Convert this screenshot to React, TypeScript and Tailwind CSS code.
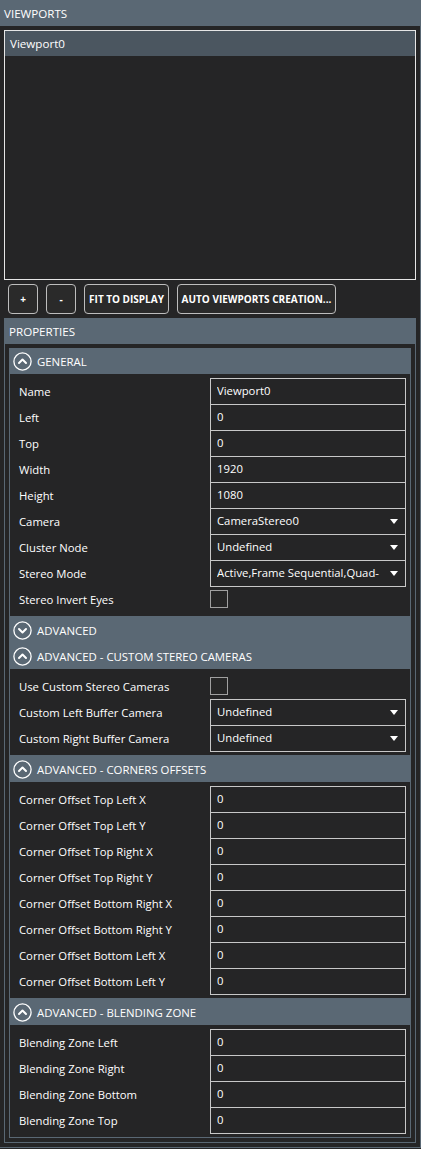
import React from "react";

const FONT = "font-['Open_Sans','Noto_Sans',sans-serif]";

function ChevronCircle({ up }: { up: boolean }) {
  return (
    <svg width="19" height="19" viewBox="0 0 19 19" className="shrink-0">
      <circle cx="9.5" cy="9.5" r="8.6" fill="none" stroke="#ffffff" strokeWidth="1.3" />
      {up ? (
        <path d="M6 11 L9.5 7.5 L13 11" fill="none" stroke="#ffffff" strokeWidth="2" strokeLinecap="round" strokeLinejoin="round" />
      ) : (
        <path d="M6 8 L9.5 11.5 L13 8" fill="none" stroke="#ffffff" strokeWidth="2" strokeLinecap="round" strokeLinejoin="round" />
      )}
    </svg>
  );
}

function SectionHeader({ title, up }: { title: string; up: boolean }) {
  return (
    <div className="h-[26px] bg-[#5a6874] flex items-center pl-[4px] gap-[5px] text-[11.4px] text-white">
      <ChevronCircle up={up} />
      <span className="pt-px">{title}</span>
    </div>
  );
}

type Row =
  | { label: string; kind: "text"; value: string }
  | { label: string; kind: "select"; value: string }
  | { label: string; kind: "check" };

function RowView({ row }: { row: Row }) {
  return (
    <div className="h-[26px] flex">
      <div className="w-[200px] pl-[9px] self-center pt-[2px] text-[11.3px] text-white leading-none whitespace-nowrap">{row.label}</div>
      {row.kind === "check" ? (
        <div className="self-center w-[18px] h-[18px] border border-[#a0a0a0] bg-[#262626]" />
      ) : (
        <div className="self-start w-[196px] h-[27px] border border-[#c8c8c8] bg-[#252526] flex items-center pl-[6px] pr-[7px] text-[11.3px] text-white">
          <span className="flex-1 whitespace-nowrap overflow-hidden">{row.value}</span>
          {row.kind === "select" && (
            <svg width="8" height="5" viewBox="0 0 8 5" className="shrink-0">
              <path d="M0 0 L8 0 L4 5 Z" fill="#ffffff" />
            </svg>
          )}
        </div>
      )}
    </div>
  );
}

function Section({ title, rows }: { title: string; rows: Row[] }) {
  return (
    <div>
      <SectionHeader title={title} up={true} />
      <div className="border-x border-b border-[#5a6874] pt-[4px] pb-[4px]">
        {rows.map((r, i) => (
          <RowView key={i} row={r} />
        ))}
      </div>
    </div>
  );
}

export default function App() {
  const general: Row[] = [
    { label: "Name", kind: "text", value: "Viewport0" },
    { label: "Left", kind: "text", value: "0" },
    { label: "Top", kind: "text", value: "0" },
    { label: "Width", kind: "text", value: "1920" },
    { label: "Height", kind: "text", value: "1080" },
    { label: "Camera", kind: "select", value: "CameraStereo0" },
    { label: "Cluster Node", kind: "select", value: "Undefined" },
    { label: "Stereo Mode", kind: "select", value: "Active,Frame Sequential,Quad-" },
    { label: "Stereo Invert Eyes", kind: "check" },
  ];
  const custom: Row[] = [
    { label: "Use Custom Stereo Cameras", kind: "check" },
    { label: "Custom Left Buffer Camera", kind: "select", value: "Undefined" },
    { label: "Custom Right Buffer Camera", kind: "select", value: "Undefined" },
  ];
  const corners: Row[] = [
    "Corner Offset Top Left X",
    "Corner Offset Top Left Y",
    "Corner Offset Top Right X",
    "Corner Offset Top Right Y",
    "Corner Offset Bottom Right X",
    "Corner Offset Bottom Right Y",
    "Corner Offset Bottom Left X",
    "Corner Offset Bottom Left Y",
  ].map((l) => ({ label: l, kind: "text" as const, value: "0" }));
  const blending: Row[] = [
    "Blending Zone Left",
    "Blending Zone Right",
    "Blending Zone Bottom",
    "Blending Zone Top",
  ].map((l) => ({ label: l, kind: "text" as const, value: "0" }));

  const btn =
    "h-[30px] border border-[#bdbdbd] rounded-[4px] bg-[#2a2a2a] text-white text-[10px] font-bold flex items-center justify-center";

  return (
    <div className={`min-h-[1149px] w-[421px] bg-[#252526] ${FONT}`}>
      <div className="w-[421px] h-[1148px] border-t border-r border-b border-[#5a6874] flex flex-col">
        <div className="h-[25px] bg-[#5a6874] pl-[4px] flex items-center text-[11.6px] text-white">VIEWPORTS</div>
        <div className="flex-1 flex flex-col pl-[4px] pr-[4px] pt-[4px] pb-[4px]">
          <div className="h-[250px] border border-[#e6e6e6] bg-[#252526]">
            <div className="h-[25px] bg-[#4b5660] pl-[5px] flex items-center text-[11.6px] text-white">Viewport0</div>
          </div>
          <div className="mt-[4px] ml-[4px] flex gap-[8px]">
            <div className={`${btn} w-[30px]`}>+</div>
            <div className={`${btn} w-[30px]`}>-</div>
            <div className={`${btn} w-[85px]`}>FIT TO DISPLAY</div>
            <div className={`${btn} w-[159px]`}>AUTO VIEWPORTS CREATION...</div>
          </div>
          <div className="mt-[4px] flex-1 border border-[#5a6874] flex flex-col">
            <div className="h-[25px] bg-[#5a6874] pl-[4px] flex items-center text-[11.6px] text-white">PROPERTIES</div>
            <div className="flex-1 p-[4px] flex flex-col">
              <Section title="GENERAL" rows={general} />
              <SectionHeader title="ADVANCED" up={false} />
              <Section title="ADVANCED - CUSTOM STEREO CAMERAS" rows={custom} />
              <Section title="ADVANCED - CORNERS OFFSETS" rows={corners} />
              <Section title="ADVANCED - BLENDING ZONE" rows={blending} />
            </div>
          </div>
        </div>
      </div>
    </div>
  );
}
